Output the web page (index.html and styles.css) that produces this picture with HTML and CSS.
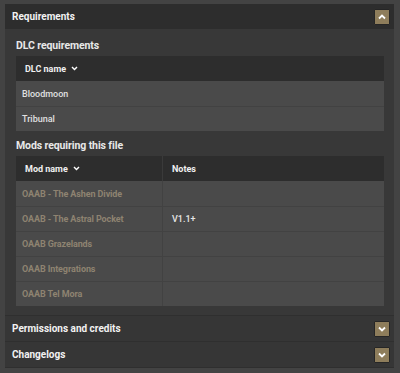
FILE: index.html
```html
<!DOCTYPE html>
<html lang="en">
<head>
    <meta charset="UTF-8">
    <meta name="viewport" content="width=device-width, initial-scale=1.0">
    <title>Requirements</title>
    <link rel="stylesheet" href="styles.css">
</head>
<body>

    <main class="panel">

        <section class="accordion open">
            <div class="acc-head">
                <span>Requirements</span>
                <button class="toggle" type="button">
                    <svg viewBox="0 0 8 8" width="8" height="8"><path d="M1 5.5 L4 2.5 L7 5.5" fill="none" stroke="#fff" stroke-width="1.8"/></svg>
                </button>
            </div>

            <div class="acc-body">
                <h3>DLC requirements</h3>
                <table class="req-table">
                    <thead>
                        <tr>
                            <th>DLC name <span class="sort"><svg viewBox="0 0 8 6" width="7" height="5"><path d="M1 1.2 L4 4.2 L7 1.2" fill="none" stroke="#fff" stroke-width="1.7"/></svg></span></th>
                        </tr>
                    </thead>
                    <tbody>
                        <tr><td class="dlc">Bloodmoon</td></tr>
                        <tr><td class="dlc">Tribunal</td></tr>
                    </tbody>
                </table>

                <h3>Mods requiring this file</h3>
                <table class="req-table">
                    <thead>
                        <tr>
                            <th class="name-col">Mod name <span class="sort"><svg viewBox="0 0 8 6" width="7" height="5"><path d="M1 1.2 L4 4.2 L7 1.2" fill="none" stroke="#fff" stroke-width="1.7"/></svg></span></th>
                            <th>Notes</th>
                        </tr>
                    </thead>
                    <tbody>
                        <tr><td class="mod">OAAB - The Ashen Divide</td><td></td></tr>
                        <tr><td class="mod">OAAB - The Astral Pocket</td><td class="note">V1.1+</td></tr>
                        <tr><td class="mod">OAAB Grazelands</td><td></td></tr>
                        <tr><td class="mod">OAAB Integrations</td><td></td></tr>
                        <tr><td class="mod">OAAB Tel Mora</td><td></td></tr>
                    </tbody>
                </table>
            </div>
        </section>

        <section class="accordion">
            <div class="acc-head">
                <span>Permissions and credits</span>
                <button class="toggle" type="button">
                    <svg viewBox="0 0 8 8" width="8" height="8"><path d="M1 2.5 L4 5.5 L7 2.5" fill="none" stroke="#fff" stroke-width="1.8"/></svg>
                </button>
            </div>
        </section>

        <section class="accordion">
            <div class="acc-head">
                <span>Changelogs</span>
                <button class="toggle" type="button">
                    <svg viewBox="0 0 8 8" width="8" height="8"><path d="M1 2.5 L4 5.5 L7 2.5" fill="none" stroke="#fff" stroke-width="1.8"/></svg>
                </button>
            </div>
        </section>

    </main>

</body>
</html>
```

FILE: styles.css
```css
body {
    margin: 0;
    font-family: Roboto, 'Liberation Sans', sans-serif;
    background-color: #434343;
    color: #e6e6e6;
}

.panel {
    margin: 4px 6px 0 5px;
    background-color: #383838;
}

.accordion {
    border-bottom: 1px solid #2f2f2f;
}

.acc-head {
    height: 25px;
    display: flex;
    align-items: center;
    justify-content: space-between;
    padding: 0 4px 0 7px;
    background-color: #363636;
    font-size: 10px;
    font-weight: 700;
    color: #f2f2f2;
}

.open .acc-head {
    background-color: #2d2d2d;
}

.toggle {
    width: 16px;
    height: 16px;
    padding: 0;
    display: flex;
    align-items: center;
    justify-content: center;
    background-color: #8e7d5b;
    border: 1px solid #262626;
    border-radius: 1px;
}

.acc-body {
    padding: 0 10px 9px 11px;
}

h3 {
    margin: 0;
    padding: 10px 0 3px 0;
    line-height: 14px;
    font-size: 10.5px;
    font-weight: 700;
    letter-spacing: -0.1px;
    color: #e8e8e8;
}

.req-table + h3 {
    padding-top: 8px;
}

.req-table {
    width: 100%;
    border-collapse: collapse;
    font-size: 9px;
}

.req-table th {
    height: 25px;
    padding: 0 0 0 9px;
    text-align: left;
    font-weight: 700;
    color: #f0f0f0;
    background-color: #2d2d2d;
}

.req-table th.name-col {
    width: 137px;
    border-right: 1px solid #3a3a3a;
}

.sort {
    display: inline-block;
    margin-left: 3px;
    vertical-align: 1px;
}

.req-table td {
    height: 24px;
    padding: 0 0 0 6px;
    background-color: #4a4a4a;
    border-top: 1px solid #424242;
}

.req-table tbody tr:first-child td {
    border-top: none;
    height: 25px;
}

.req-table td + td {
    border-left: 1px solid #424242;
    padding-left: 9px;
}

.dlc {
    font-weight: 500;
    color: #e0e0e0;
}

.mod {
    font-weight: 700;
    letter-spacing: -0.1px;
    color: #8e8371;
}

.note {
    font-weight: 500;
    color: #e6e6e6;
}
```
